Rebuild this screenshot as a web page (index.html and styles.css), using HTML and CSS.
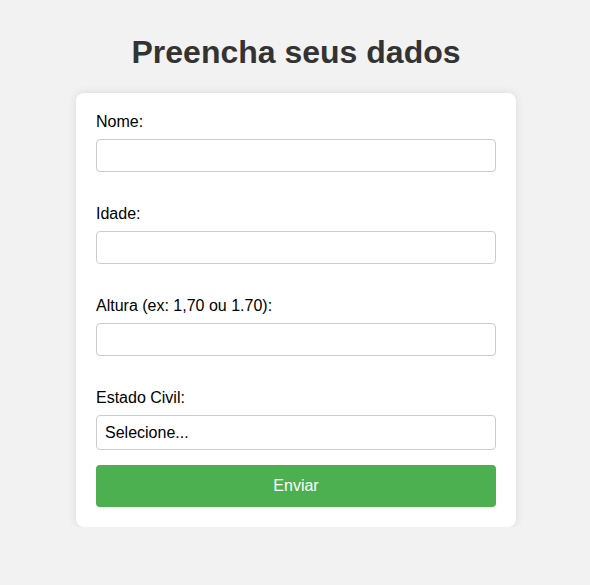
FILE: index.html
```html
<!DOCTYPE html>
<html lang="pt-BR">
<head>
<meta charset="utf-8">
<title>Preencha seus dados</title>
<link rel="stylesheet" href="styles.css">
</head>
<body>
<h1 class="title">Preencha seus dados</h1>
<form class="card">
  <div class="group">
    <label class="label" for="nome">Nome:</label>
    <input class="field" id="nome" type="text">
  </div>
  <div class="group">
    <label class="label" for="idade">Idade:</label>
    <input class="field" id="idade" type="text">
  </div>
  <div class="group">
    <label class="label" for="altura">Altura (ex: 1,70 ou 1.70):</label>
    <input class="field" id="altura" type="text">
  </div>
  <div class="group last">
    <label class="label" for="estado">Estado Civil:</label>
    <select class="field select" id="estado">
      <option>Selecione...</option>
    </select>
  </div>
  <button class="submit" type="button">Enviar</button>
</form>
</body>
</html>
```
FILE: styles.css
```css
html, body {
  margin: 0;
  padding: 0;
}
body {
  background: #f2f2f2;
  font-family: "Liberation Sans", Arial, sans-serif;
  font-size: 16px;
  color: #000;
  padding-top: 34px;
  padding-left: 2px;
}
.title {
  margin: 0 0 22px;
  text-align: center;
  font-size: 32px;
  font-weight: bold;
  color: #333;
  line-height: 37px;
}
.card {
  width: 400px;
  margin: 0 auto;
  background: #fff;
  border-radius: 8px;
  padding: 20px;
  box-shadow: 0 0 10px rgba(0, 0, 0, 0.1);
  display: flex;
  flex-direction: column;
}
.group {
  display: flex;
  flex-direction: column;
  margin-bottom: 33px;
}
.group.last {
  margin-bottom: 15px;
}
.label {
  line-height: 18px;
  margin-bottom: 8px;
}
.field {
  box-sizing: border-box;
  width: 100%;
  height: 33px;
  border: 1px solid #ccc;
  border-radius: 4px;
  padding: 0 8px;
  font-family: inherit;
  font-size: 16px;
  background: #fff;
  color: #000;
  margin: 0;
}
.select {
  height: 35px;
  appearance: none;
  -webkit-appearance: none;
}
.submit {
  height: 42px;
  border: none;
  border-radius: 4px;
  background: #4caf50;
  color: #fff;
  font-family: inherit;
  font-size: 16px;
  padding: 0;
  margin: 0;
}
```
